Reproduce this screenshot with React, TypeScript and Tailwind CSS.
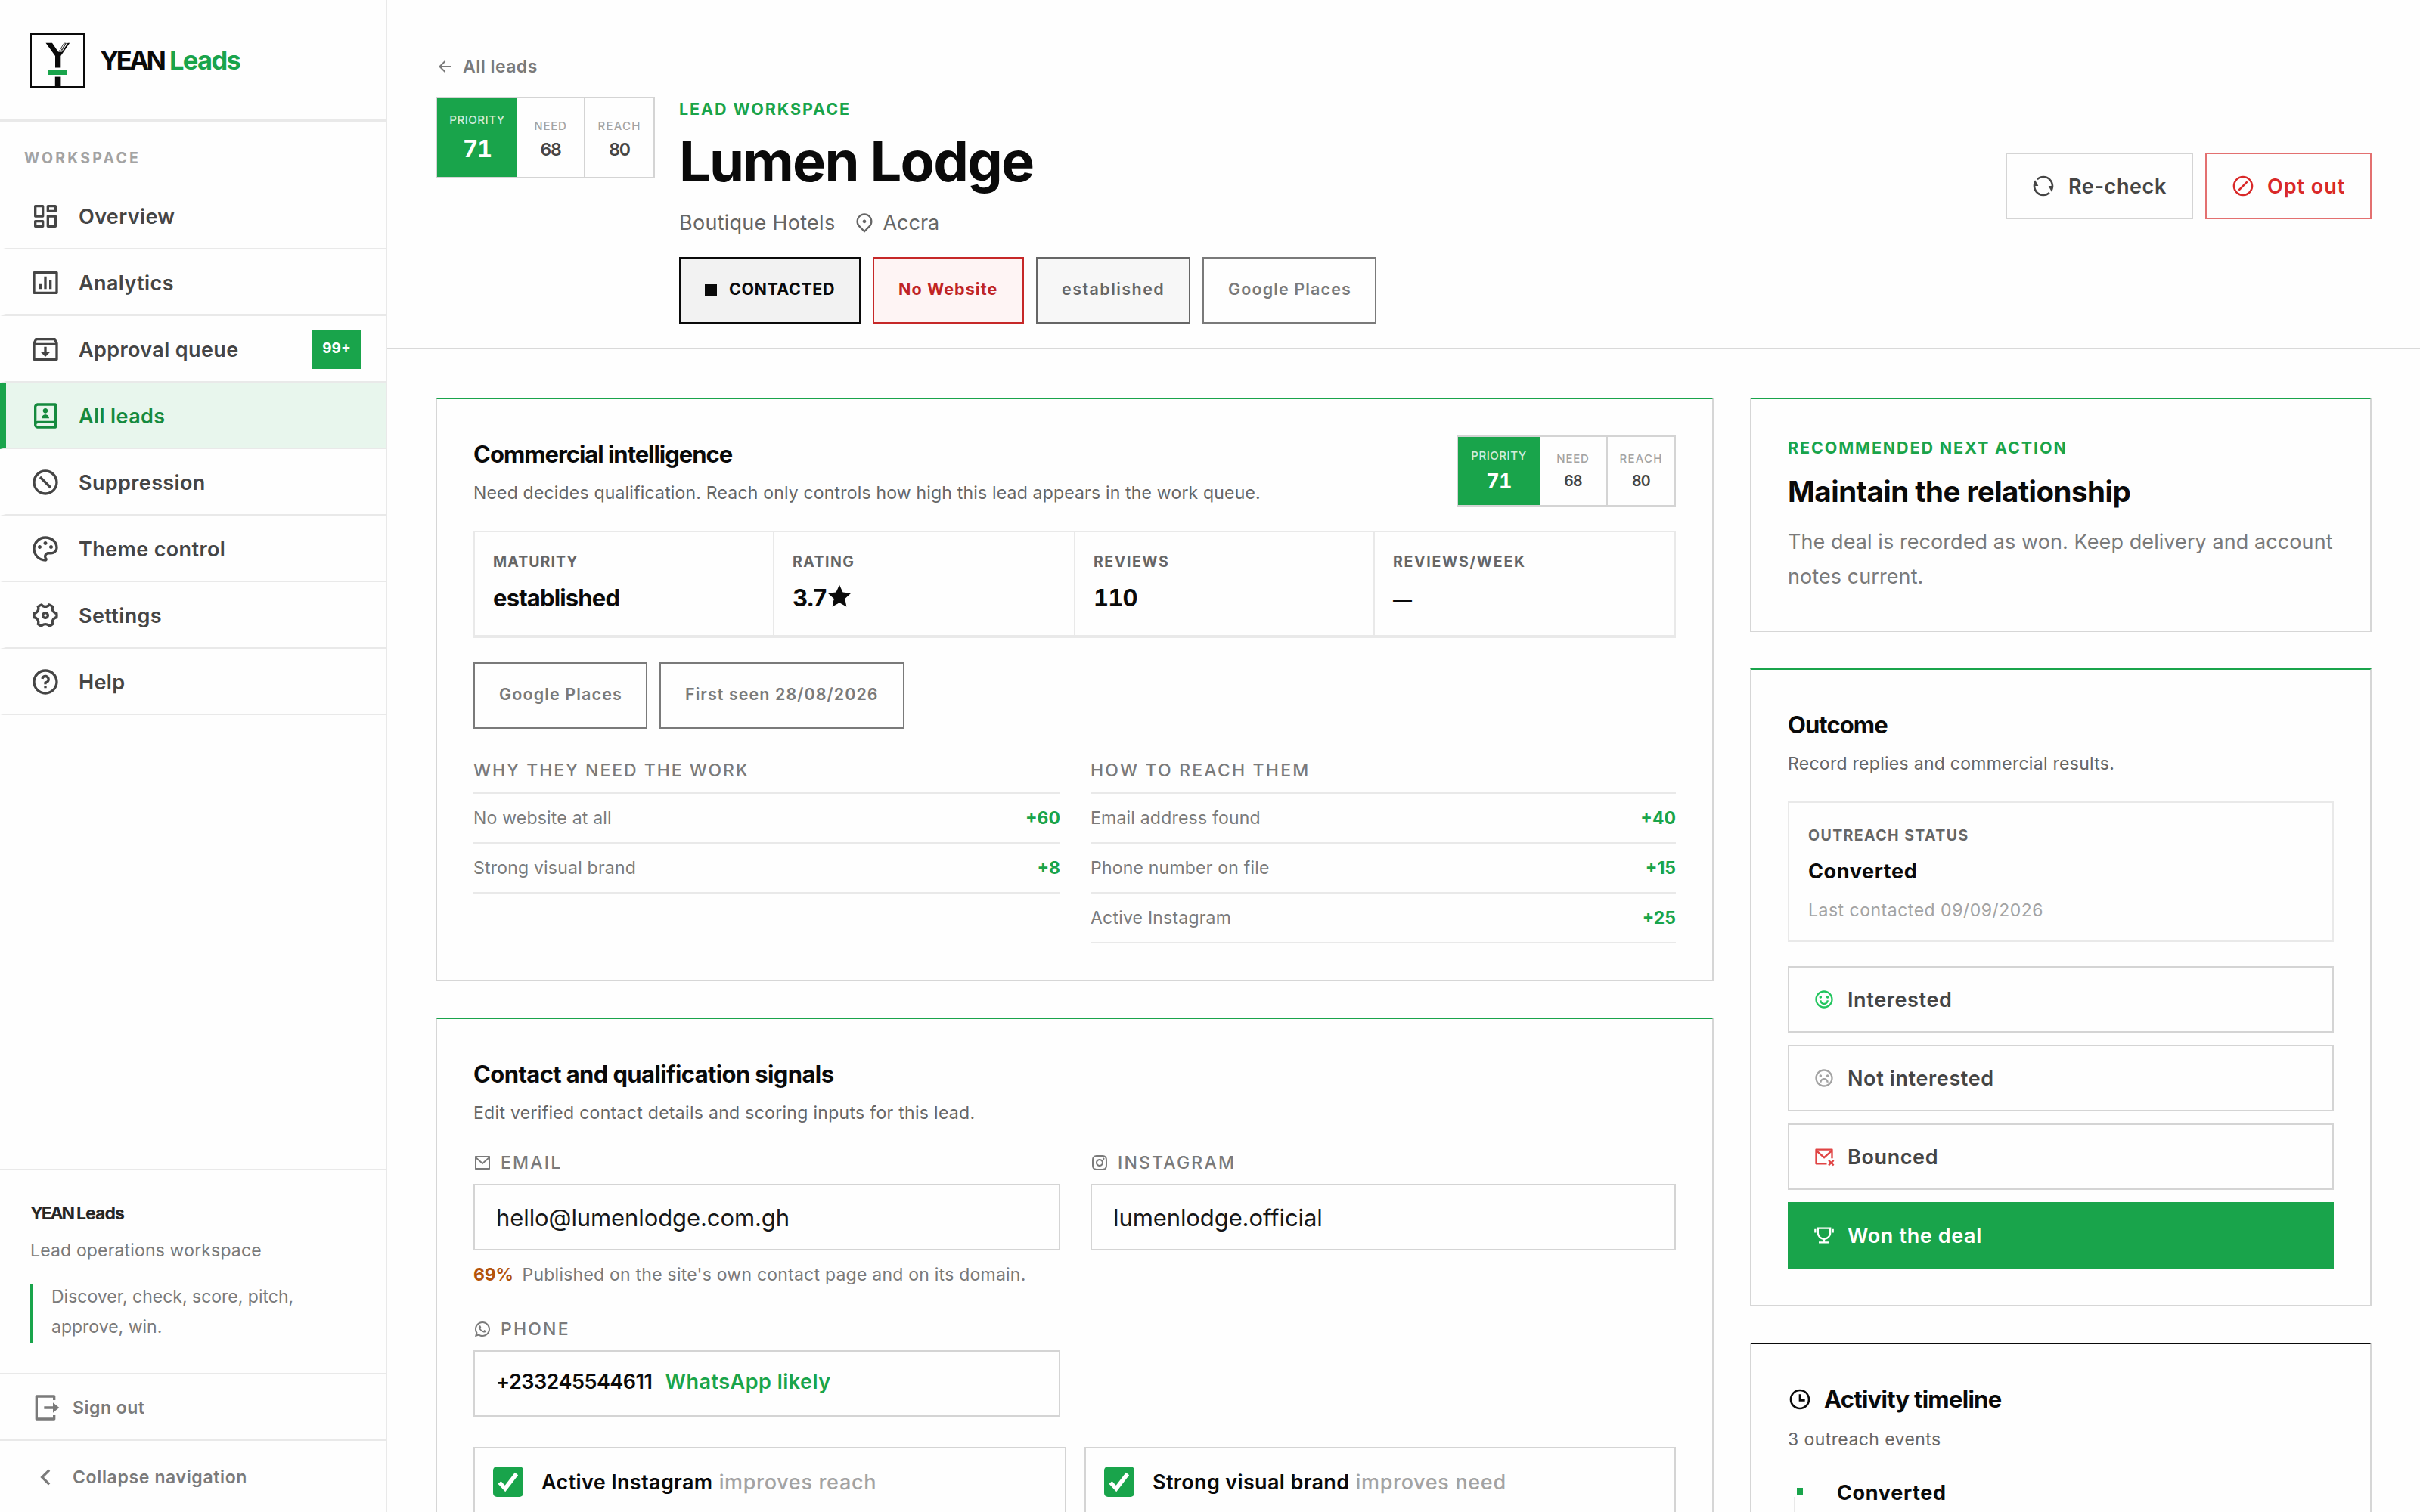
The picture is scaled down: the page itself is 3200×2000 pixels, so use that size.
import type { ReactNode } from "react";
import type { IconType } from "react-icons";
import {
  RiArrowLeftLine,
  RiArrowLeftSLine,
  RiBarChartBoxLine,
  RiContactsBook2Line,
  RiDashboardLine,
  RiEmotionHappyLine,
  RiEmotionUnhappyLine,
  RiForbid2Line,
  RiForbidLine,
  RiInboxArchiveLine,
  RiInstagramLine,
  RiLogoutBoxRLine,
  RiMailCloseLine,
  RiMailLine,
  RiMapPin2Line,
  RiPaletteLine,
  RiQuestionLine,
  RiRefreshLine,
  RiSettings4Line,
  RiStarFill,
  RiTimeLine,
  RiTrophyLine,
  RiWhatsappLine,
} from "react-icons/ri";

function LogoMark() {
  return (
    <svg viewBox="0 0 72 72" className="size-[72px] shrink-0">
      <rect x="1" y="1" width="70" height="70" fill="none" stroke="#0a0a0a" strokeWidth="2" />
      <path d="M20.5 12.7H29L37 24.6H42L49.6 12.7H52.2L40.3 30V45.5H33V30Z" fill="#0a0a0a" />
      <path d="M38.6 23.2L44.6 13.2H47.4L41.6 23.2ZM41.2 22L46.6 13.6" fill="none" stroke="#0a0a0a" strokeWidth="0.8" />
      <rect x="24" y="48.3" width="25" height="6.7" fill="#19a44b" />
      <rect x="32.8" y="57.6" width="7.6" height="13" fill="#0a0a0a" />
    </svg>
  );
}

type NavEntry = { label: string; icon: IconType; badge?: string; active?: boolean };

const NAV: NavEntry[] = [
  { label: "Overview", icon: RiDashboardLine },
  { label: "Analytics", icon: RiBarChartBoxLine },
  { label: "Approval queue", icon: RiInboxArchiveLine, badge: "99+" },
  { label: "All leads", icon: RiContactsBook2Line, active: true },
  { label: "Suppression", icon: RiForbidLine },
  { label: "Theme control", icon: RiPaletteLine },
  { label: "Settings", icon: RiSettings4Line },
  { label: "Help", icon: RiQuestionLine },
];

function Sidebar() {
  return (
    <aside className="flex h-full w-[512px] shrink-0 flex-col border-r-2 border-[#e9e9e9]">
      <div className="flex h-[162px] items-center gap-5 border-b-4 border-[#e9e9e9] pt-[2px] pl-10">
        <LogoMark />
        <span className="flex text-[34.5px] font-bold whitespace-nowrap text-[#0a0a0a]">
          <span className="w-[92px] tracking-[-0.1em]">YEAN</span>
          <span className="tracking-[-0.048em] text-[#19a44b]">Leads</span>
        </span>
      </div>
      <div className="px-8 pt-8 pb-[18px] text-[19.5px] leading-[30px] font-bold tracking-[0.165em] text-[#a3a3a3]">
        WORKSPACE
      </div>
      <nav className="flex flex-col">
        {NAV.map(({ label, icon: Icon, badge, active }) => (
          <a
            key={label}
            className={
              active
                ? "flex h-[88px] items-center gap-6 border-b-2 border-l-8 border-b-[#e9e9e9] border-l-[#19a44b] bg-[#e8f6ed] pt-[2px] pr-8 pl-8 text-[#158a3e]"
                : "flex h-[88px] items-center gap-6 border-b-2 border-l-8 border-b-[#e9e9e9] border-l-transparent pt-[2px] pr-8 pl-8 text-[#454545]"
            }
          >
            <Icon className="size-10 shrink-0" />
            <span className="flex-1 pt-[2px] text-[27px] font-semibold tracking-[0.014em] whitespace-nowrap">{label}</span>
            {badge && (
              <span className="flex h-[52px] w-[66px] items-center justify-center bg-[#19a44b] pb-[2px] text-[19px] font-bold text-white">
                {badge}
              </span>
            )}
          </a>
        ))}
      </nav>
      <div className="mt-auto border-t-2 border-[#e9e9e9] px-10 py-10">
        <div className="flex text-[23px] leading-[34px] font-bold text-[#262626]">
          <span className="w-[61px] tracking-[-0.095em]">YEAN</span>
          <span className="tracking-[-0.04em]">Leads</span>
        </div>
        <div className="mt-3 text-[23px] leading-[40px] tracking-[0.007em] text-[#7a7a7a]">Lead operations workspace</div>
        <div className="mt-6 flex h-[78px] items-center border-l-4 border-[#19a44b] pl-6">
          <p className="-mt-1 text-[23px] leading-[40px] text-[#7a7a7a]">
            Discover, check, score, pitch,
            <br />
            approve, win.
          </p>
        </div>
      </div>
      <div className="flex h-[88px] items-center gap-4 border-t-2 border-[#e9e9e9] pt-[2px] pl-10 text-[#7a7a7a]">
        <RiLogoutBoxRLine className="size-10" />
        <span className="text-[23px] font-semibold tracking-[0.022em]">Sign out</span>
      </div>
      <div className="flex h-24 items-center gap-4 border-t-2 border-[#e9e9e9] pt-[2px] pl-10 text-[#7a7a7a]">
        <RiArrowLeftSLine className="size-10" />
        <span className="text-[23px] font-semibold tracking-[0.028em]">Collapse navigation</span>
      </div>
    </aside>
  );
}

function HeaderScore() {
  return (
    <div className="flex h-[108px] w-[290px] shrink-0 border-2 border-[#d4d4d4] text-center">
      <div className="flex w-[106px] flex-col justify-center bg-[#19a44b] text-white">
        <span className="text-[15px] leading-[20px] font-medium tracking-[0.034em] text-white/80">PRIORITY</span>
        <span className="mt-[10px] text-[31px] leading-[36px] font-bold tabular-nums tracking-[-0.03em]">71</span>
      </div>
      <div className="flex w-[88px] flex-col justify-center pt-[5px]">
        <span className="text-[15px] leading-[20px] font-medium tracking-[0.05em] text-[#a3a3a3]">NEED</span>
        <span className="mt-[6px] text-[23px] leading-[30px] font-semibold tracking-[-0.05em] text-[#454545]">68</span>
      </div>
      <div className="flex w-[92px] flex-col justify-center border-l-2 border-[#d4d4d4] pt-[5px]">
        <span className="text-[15px] leading-[20px] font-medium tracking-[0.08em] text-[#a3a3a3]">REACH</span>
        <span className="mt-[6px] text-[23px] leading-[30px] font-semibold tracking-[-0.05em] text-[#454545]">80</span>
      </div>
    </div>
  );
}

function CompactScore() {
  return (
    <div className="flex h-[94px] w-[290px] shrink-0 border-2 border-[#d4d4d4] text-center">
      <div className="flex w-[108px] flex-col justify-center bg-[#19a44b] text-white">
        <span className="text-[15px] leading-[20px] font-medium tracking-[0.034em] text-white/80">PRIORITY</span>
        <span className="mt-2 text-[27px] leading-[32px] font-bold tabular-nums tracking-[-0.03em]">71</span>
      </div>
      <div className="flex w-[88px] flex-col justify-center">
        <span className="text-[15px] leading-[20px] font-medium tracking-[0.05em] text-[#a3a3a3]">NEED</span>
        <span className="mt-[6px] text-[19.5px] leading-[26px] font-semibold tracking-[-0.04em] text-[#454545]">68</span>
      </div>
      <div className="flex w-[90px] flex-col justify-center border-l-2 border-[#d4d4d4]">
        <span className="text-[15px] leading-[20px] font-medium tracking-[0.08em] text-[#a3a3a3]">REACH</span>
        <span className="mt-[6px] text-[19.5px] leading-[26px] font-semibold tracking-[-0.04em] text-[#454545]">80</span>
      </div>
    </div>
  );
}

function Chip({ className, children }: { className: string; children: ReactNode }) {
  return (
    <span className={`flex h-[88px] items-center gap-4 border-2 pl-8 text-[21.5px] whitespace-nowrap ${className}`}>
      {children}
    </span>
  );
}

function PageHeader() {
  return (
    <header className="flex items-center justify-between border-b-2 border-[#d9d9d9] px-16 pt-16 pb-8">
      <div>
        <div className="mb-4 flex h-12 items-center gap-3 text-[#7a7a7a]">
          <RiArrowLeftLine className="size-6" />
          <span className="text-[23px] font-semibold tracking-[0.02em]">All leads</span>
        </div>
        <div className="flex items-start gap-8">
          <HeaderScore />
          <div>
            <div className="text-[21.5px] leading-[32px] font-bold tracking-[0.09em] text-[#19a44b]">LEAD WORKSPACE</div>
            <h1 className="mt-[11px] text-[74px] leading-[84px] font-bold tracking-[-0.024em] text-[#0a0a0a]">Lumen Lodge</h1>
            <div className="mt-[17px] flex h-11 items-center gap-[25px] text-[27px] text-[#666666]">
              <span className="pt-[2px] tracking-[0.01em]">Boutique Hotels</span>
              <span className="flex items-center gap-[10px]">
                <RiMapPin2Line className="size-7" />
                <span className="pt-[2px]">Accra</span>
              </span>
            </div>
            <div className="mt-6 flex gap-4">
              <Chip className="w-[240px] border-[#0a0a0a] bg-[#f2f2f2] font-bold tracking-[0.024em] text-[#0a0a0a]">
                <span className="size-4 bg-[#0a0a0a]" />
                <span className="pb-1">CONTACTED</span>
              </Chip>
              <Chip className="w-[200px] border-[#c62828] bg-[#fef4f4] font-bold tracking-[0.05em] text-[#c02424]">
                <span className="pb-1">No Website</span>
              </Chip>
              <Chip className="w-[204px] border-[#666666] bg-[#f7f7f7] font-semibold tracking-[0.067em] text-[#666666]">
                <span className="pb-1">established</span>
              </Chip>
              <Chip className="w-[230px] border-[#7a7a7a] font-semibold tracking-[0.052em] text-[#7a7a7a]">
                <span className="pb-1">Google Places</span>
              </Chip>
            </div>
          </div>
        </div>
      </div>
      <div className="flex gap-4 text-[27px] font-semibold">
        <button className="flex h-[88px] w-[248px] items-center gap-[17px] border-2 border-[#d4d4d4] pl-8 tracking-[0.022em] text-[#454545]">
          <RiRefreshLine className="size-8" />
          <span className="pt-[2px]">Re-check</span>
        </button>
        <button className="flex h-[88px] w-[220px] items-center gap-4 border-2 border-[#e37070] pl-8 tracking-[0.036em] text-[#d92929]">
          <RiForbid2Line className="size-8" />
          <span className="pt-[2px]">Opt out</span>
        </button>
      </div>
    </header>
  );
}

const STATS: { label: string; value: ReactNode; spacing: string }[] = [
  { label: "MATURITY", value: "established", spacing: "tracking-[0.055em]" },
  {
    label: "RATING",
    value: (
      <span className="flex items-center">
        3.7
        <RiStarFill className="-mt-1 ml-[2px] size-8" />
      </span>
    ),
    spacing: "tracking-[0.075em]",
  },
  { label: "REVIEWS", value: <span className="tabular-nums">110</span>, spacing: "tracking-[0.08em]" },
  { label: "REVIEWS/WEEK", value: <span className="text-[25px]">—</span>, spacing: "tracking-[0.088em]" },
];

function FactorList({ title, titleSpacing, rows }: { title: string; titleSpacing: string; rows: [string, string][] }) {
  return (
    <div>
      <h3 className={`pb-[11px] text-[23px] leading-[36px] font-medium text-[#7a7a7a] ${titleSpacing}`}>{title}</h3>
      <ul className="border-t-2 border-[#e9e9e9]">
        {rows.map(([name, points]) => (
          <li
            key={name}
            className="flex h-[66px] items-center justify-between border-b-2 border-[#e9e9e9] text-[23px] tracking-[0.009em] text-[#7a7a7a]"
          >
            <span>{name}</span>
            <span className="font-bold tracking-normal text-[#19a44b]">{points}</span>
          </li>
        ))}
      </ul>
    </div>
  );
}

function Intelligence() {
  return (
    <section className="h-[772px] border-2 border-[#d6d6d6] border-t-[#19a44b] p-12">
      <div className="flex h-[94px] justify-between">
        <div className="pt-[3px]">
          <h2 className="text-[31px] leading-[44px] font-bold tracking-[-0.033em] text-[#0a0a0a]">Commercial intelligence</h2>
          <p className="mt-[10px] text-[23px] leading-[38px] tracking-[0.008em] text-[#666666]">
            Need decides qualification. Reach only controls how high this lead appears in the work queue.
          </p>
        </div>
        <CompactScore />
      </div>
      <div className="mt-8 grid h-[142px] grid-cols-[396px_398px_396px_396px] border-2 border-b-4 border-[#e9e9e9]">
        {STATS.map(({ label, value, spacing }, i) => (
          <div
            key={label}
            className={i < 3 ? "border-r-2 border-[#e9e9e9] pt-[25px] pl-6" : "pt-[25px] pl-6"}
          >
            <div className={`text-[19.5px] leading-[28px] font-bold text-[#666666] ${spacing}`}>{label}</div>
            <div className="mt-[14px] text-[31px] leading-[40px] font-bold tracking-[-0.027em] text-[#0a0a0a]">{value}</div>
          </div>
        ))}
      </div>
      <div className="mt-8 flex gap-4">
        <Chip className="w-[230px] border-[#7a7a7a] font-semibold tracking-[0.052em] text-[#7a7a7a]">
          <span className="pb-1">Google Places</span>
        </Chip>
        <Chip className="w-[324px] border-[#7a7a7a] font-semibold tracking-[0.049em] text-[#7a7a7a]">
          <span className="pb-1">First seen 28/08/2026</span>
        </Chip>
      </div>
      <div className="mt-[37px] grid grid-cols-[776px_774px] gap-10">
        <FactorList
          title="WHY THEY NEED THE WORK"
          titleSpacing="tracking-[0.085em]"
          rows={[
            ["No website at all", "+60"],
            ["Strong visual brand", "+8"],
          ]}
        />
        <FactorList
          title="HOW TO REACH THEM"
          titleSpacing="tracking-[0.095em]"
          rows={[
            ["Email address found", "+40"],
            ["Phone number on file", "+15"],
            ["Active Instagram", "+25"],
          ]}
        />
      </div>
    </section>
  );
}

function Field({ icon: Icon, label, children, note }: { icon: IconType; label: string; children: ReactNode; note?: ReactNode }) {
  return (
    <div>
      <div className="flex h-9 items-center gap-3 text-[23px] font-medium tracking-[0.095em] text-[#7a7a7a]">
        <Icon className="size-6" />
        {label}
      </div>
      <div className="mt-[10px] flex h-[88px] items-center border-2 border-[#d4d4d4] pl-7">{children}</div>
      {note}
    </div>
  );
}

function SignalToggle({ label, hint }: { label: string; hint: string }) {
  return (
    <div className="flex h-24 items-start gap-6 border-2 border-[#d4d4d4] pt-6 pl-6">
      <span className="flex size-10 shrink-0 items-center justify-center rounded-[5px] bg-[#19a44b]">
        <svg viewBox="0 0 40 40" className="size-10">
          <path d="M8.5 21L16 29L31 9.5" fill="none" stroke="#fff" strokeWidth="5.4" />
        </svg>
      </span>
      <span className="pt-px text-[27px] leading-[40px] font-semibold tracking-[0.013em] whitespace-nowrap text-[#0a0a0a]">
        {label} <span className="ml-px font-medium tracking-[0.025em] text-[#a3a3a3]">{hint}</span>
      </span>
    </div>
  );
}

function ContactSignals() {
  return (
    <section className="border-2 border-[#d6d6d6] border-t-[#19a44b] p-12">
      <h2 className="mt-[3px] text-[31px] leading-[44px] font-bold tracking-[-0.02em] text-[#0a0a0a]">
        Contact and qualification signals
      </h2>
      <p className="mt-[10px] text-[23px] leading-[38px] tracking-[0.013em] text-[#666666]">
        Edit verified contact details and scoring inputs for this lead.
      </p>
      <div className="mt-[29px] grid grid-cols-[776px_774px] gap-x-10 gap-y-9">
        <Field
          icon={RiMailLine}
          label="EMAIL"
          note={
            <p className="mt-[14px] flex gap-3 text-[23px] leading-[36px] tracking-[0.01em] whitespace-nowrap text-[#7a7a7a]">
              <span className="font-bold tracking-[-0.01em] text-[#b45309]">69%</span>
              Published on the site's own contact page and on its domain.
            </p>
          }
        >
          <span className="pt-[2px] text-[31px] tracking-[-0.003em] text-[#171717]">hello@lumenlodge.com.gh</span>
        </Field>
        <Field icon={RiInstagramLine} label="INSTAGRAM">
          <span className="pt-[2px] text-[31px] tracking-[-0.003em] text-[#171717]">lumenlodge.official</span>
        </Field>
        <Field icon={RiWhatsappLine} label="PHONE">
          <span className="flex gap-[17px] pb-[3px] text-[27px] font-semibold">
            <span className="tracking-[-0.019em] text-[#0a0a0a]">+233245544611</span>
            <span className="tracking-[0.018em] text-[#19a44b]">WhatsApp likely</span>
          </span>
        </Field>
      </div>
      <div className="mt-10 grid grid-cols-[784px_782px] gap-6">
        <SignalToggle label="Active Instagram" hint="improves reach" />
        <SignalToggle label="Strong visual brand" hint="improves need" />
      </div>
    </section>
  );
}

function NextAction() {
  return (
    <section className="h-[310px] border-2 border-[#d6d6d6] border-t-[#19a44b] p-12">
      <div className="text-[21.5px] leading-[32px] font-bold tracking-[0.087em] text-[#19a44b]">RECOMMENDED NEXT ACTION</div>
      <h2 className="mt-4 text-[38.5px] leading-[52px] font-bold tracking-[-0.013em] text-[#0a0a0a]">Maintain the relationship</h2>
      <p className="mt-[18px] text-[27px] leading-[45.5px] tracking-[0.003em] whitespace-nowrap text-[#7a7a7a]">
        The deal is recorded as won. Keep delivery and account
        <br />
        notes current.
      </p>
    </section>
  );
}

const OUTCOMES: { label: string; icon: IconType; frame: string; tint: string }[] = [
  { label: "Interested", icon: RiEmotionHappyLine, frame: "border-[#d4d4d4] text-[#454545]", tint: "text-[#22c55e]" },
  { label: "Not interested", icon: RiEmotionUnhappyLine, frame: "border-[#d4d4d4] text-[#454545]", tint: "text-[#a3a3a3]" },
  { label: "Bounced", icon: RiMailCloseLine, frame: "border-[#d4d4d4] text-[#454545]", tint: "text-[#e04444]" },
  { label: "Won the deal", icon: RiTrophyLine, frame: "border-[#19a44b] bg-[#19a44b] text-white", tint: "text-white" },
];

function Outcome() {
  return (
    <section className="h-[844px] border-2 border-[#d6d6d6] border-t-[#19a44b] p-12">
      <h2 className="mt-[3px] text-[31px] leading-[44px] font-bold tracking-[-0.03em] text-[#0a0a0a]">Outcome</h2>
      <p className="mt-[10px] text-[23px] leading-[38px] tracking-[0.012em] text-[#666666]">Record replies and commercial results.</p>
      <div className="mt-[31px] h-[186px] border-2 border-[#e9e9e9] pt-[29px] pl-[25px]">
        <div className="text-[19.5px] leading-[28px] font-bold tracking-[0.073em] text-[#666666]">OUTREACH STATUS</div>
        <div className="mt-4 text-[27px] leading-[36px] font-bold tracking-[0.022em] text-[#0a0a0a]">Converted</div>
        <div className="mt-4 text-[23px] leading-[34px] tracking-[0.022em] text-[#a3a3a3]">Last contacted 09/09/2026</div>
      </div>
      <div className="mt-8 flex flex-col gap-4">
        {OUTCOMES.map(({ label, icon: Icon, frame, tint }) => (
          <button
            key={label}
            className={`flex h-[88px] items-center gap-[17px] border-2 pl-8 text-[27px] font-semibold tracking-[0.023em] ${frame}`}
          >
            <Icon className={`size-7 ${tint}`} />
            <span className="pt-[2px]">{label}</span>
          </button>
        ))}
      </div>
    </section>
  );
}

function Timeline() {
  return (
    <section className="border-2 border-[#d6d6d6] border-t-[#0a0a0a] p-12">
      <h2 className="mt-[3px] flex h-11 items-center gap-4 text-[31px] font-bold tracking-[-0.023em] text-[#0a0a0a]">
        <RiTimeLine className="size-8" />
        Activity timeline
      </h2>
      <p className="mt-3 text-[23px] leading-[38px] tracking-[0.018em] text-[#666666]">3 outreach events</p>
      <div className="mt-[34px] flex">
        <div className="flex w-[65px] flex-col pl-2">
          <span className="mt-[11px] ml-1 h-[10px] w-2 bg-[#19a44b]" />
          <span className="mt-[2px] h-24 w-[2px] bg-[#e9e9e9]" />
        </div>
        <span className="text-[27px] leading-[36px] font-bold tracking-[0.024em] text-[#0a0a0a]">Converted</span>
      </div>
    </section>
  );
}

export default function App() {
  return (
    <div className="flex h-[2000px] w-[3200px] overflow-hidden bg-[#fefefe] font-['Inter','Liberation_Sans',sans-serif]">
      <Sidebar />
      <main className="flex min-w-0 flex-1 flex-col">
        <PageHeader />
        <div className="flex items-start gap-12 px-16 pt-16">
          <div className="flex w-[1690px] flex-col gap-12">
            <Intelligence />
            <ContactSignals />
          </div>
          <div className="flex w-[822px] flex-col gap-12">
            <NextAction />
            <Outcome />
            <Timeline />
          </div>
        </div>
      </main>
    </div>
  );
}
